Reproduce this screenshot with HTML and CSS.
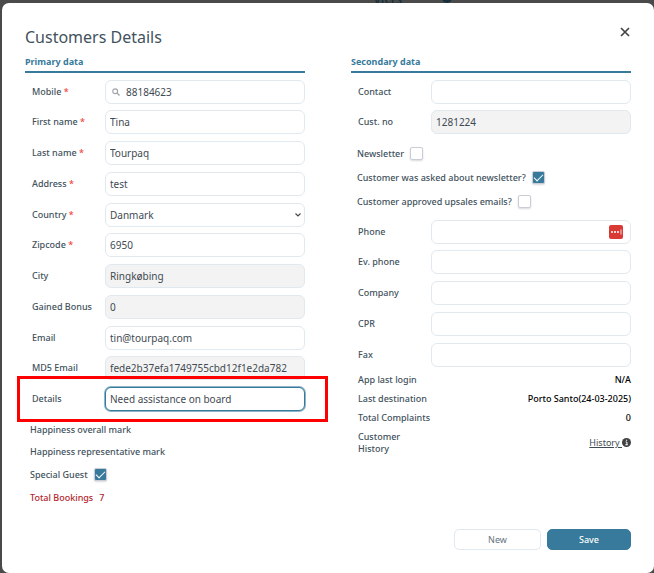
FILE: index.html
```html
<!DOCTYPE html>
<html lang="en">
<head>
<meta charset="utf-8">
<meta name="viewport" content="width=device-width, initial-scale=1">
<title>Customers Details</title>
<link rel="stylesheet" href="styles.css">
</head>
<body>
<div class="backdrop" aria-hidden="true"><span class="backdrop-text">VICES</span><span class="backdrop-dot"></span></div>
<main class="dialog" role="dialog" aria-labelledby="title">
  <header class="dialog-header">
    <h1 id="title">Customers Details</h1>
    <button class="close" type="button" aria-label="Close">
      <svg viewBox="0 0 10 10" width="10" height="10"><path d="M1 1L9 9M9 1L1 9" fill="none" stroke="#444" stroke-width="1.7"/></svg>
    </button>
  </header>
  <form class="form">
    <div class="columns">
      <section class="column">
        <h2>Primary data</h2>
        <div class="fields">
          <div class="field"><label for="mobile">Mobile <b>*</b></label>
            <div class="control">
              <svg class="search" viewBox="0 0 8 8" width="8" height="8"><circle cx="3.2" cy="3.2" r="2.4" fill="none" stroke="#a3a7b0" stroke-width="1.2"/><path d="M5 5L7.5 7.5" stroke="#a3a7b0" stroke-width="1.4"/></svg>
              <input class="with-icon" id="mobile" type="text" value="88184623"></div></div>
          <div class="field"><label for="first">First name <b>*</b></label><input id="first" type="text" value="Tina"></div>
          <div class="field"><label for="last">Last name <b>*</b></label><input id="last" type="text" value="Tourpaq"></div>
          <div class="field"><label for="address">Address <b>*</b></label><input id="address" type="text" value="test"></div>
          <div class="field"><label for="country">Country <b>*</b></label>
            <div class="control">
              <select id="country"><option>Danmark</option></select>
              <svg class="chevron" viewBox="0 0 6 4" width="6" height="4"><path d="M.5 .5L3 3L5.500 .5" fill="none" stroke="#444" stroke-width="1.1"/></svg>
            </div></div>
          <div class="field"><label for="zip">Zipcode <b>*</b></label><input id="zip" type="text" value="6950"></div>
          <div class="field"><label for="city">City</label><input id="city" type="text" value="Ringkøbing" readonly></div>
          <div class="field"><label for="bonus">Gained Bonus</label><input id="bonus" type="text" value="0" readonly></div>
          <div class="field"><label for="email">Email</label><input id="email" type="text" value="tin@tourpaq.com"></div>
          <div class="field"><label for="md5">MD5 Email</label><input id="md5" type="text" value="fede2b37efa1749755cbd12f1e2da782" readonly></div>
          <div class="field highlighted"><label for="details">Details</label><input class="active" id="details" type="text" value="Need assistance on board"></div>
        </div>
        <div class="notes">
          <p>Happiness overall mark</p>
          <p>Happiness representative mark</p>
          <div class="check"><label for="guest">Special Guest</label><input id="guest" type="checkbox" checked></div>
          <p class="bookings"><span>Total Bookings</span><span>7</span></p>
        </div>
      </section>
      <section class="column">
        <h2>Secondary data</h2>
        <div class="fields">
          <div class="field"><label for="contact">Contact</label><input id="contact" type="text"></div>
          <div class="field"><label for="custno">Cust. no</label><input id="custno" type="text" value="1281224" readonly></div>
        </div>
        <div class="checks">
          <div class="check"><label for="news">Newsletter</label><input id="news" type="checkbox"></div>
          <div class="check"><label for="asked">Customer was asked about newsletter?</label><input id="asked" type="checkbox" checked></div>
          <div class="check"><label for="upsales">Customer approved upsales emails?</label><input id="upsales" type="checkbox"></div>
        </div>
        <div class="fields">
          <div class="field"><label for="phone">Phone</label>
            <div class="control">
              <input id="phone" type="text">
              <svg class="manager" viewBox="0 0 14 14" width="14" height="14"><rect width="14" height="14" rx="2" fill="#d93a36"/><circle cx="3" cy="7" r="1" fill="#fff"/><circle cx="6" cy="7" r="1" fill="#fff"/><circle cx="9" cy="7" r="1" fill="#fff"/><path d="M12 4.500V9.500" stroke="#fff" stroke-width=".8"/></svg>
            </div></div>
          <div class="field"><label for="evphone">Ev. phone</label><input id="evphone" type="text"></div>
          <div class="field"><label for="company">Company</label><input id="company" type="text"></div>
          <div class="field"><label for="cpr">CPR</label><input id="cpr" type="text"></div>
          <div class="field"><label for="fax">Fax</label><input id="fax" type="text"></div>
        </div>
        <dl class="facts">
          <div><dt>App last login</dt><dd>N/A</dd></div>
          <div><dt>Last destination</dt><dd>Porto Santo(24-03-2025)</dd></div>
          <div><dt>Total Complaints</dt><dd>0</dd></div>
          <div><dt>Customer History</dt><dd><a href="#history">History <svg viewBox="0 0 10 10" width="9" height="9"><circle cx="5" cy="5" r="5" fill="#3f4143"/><path d="M4 4.500H5.500V7.500M3.700 7.500H6.500M4.400 2.500H5.700" fill="none" stroke="#fff" stroke-width="1.1"/></svg></a></dd></div>
        </dl>
      </section>
    </div>
    <footer class="actions">
      <button class="button" type="button">New</button>
      <button class="button primary" type="button">Save</button>
    </footer>
  </form>
</main>
</body>
</html>
```
FILE: styles.css
```css
* { box-sizing: border-box; }

body {
  margin: 0;
  padding: 3px 0 0 2px;
  background: #4a4a4a;
  color: #42525c;
  font: 500 9px/12px "Noto Sans", "Open Sans", sans-serif;
}

h1, h2, p, dl, dd { margin: 0; }

.backdrop {
  position: absolute;
  top: 0;
  left: 374px;
  display: flex;
  align-items: flex-end;
  gap: 40px;
  height: 3px;
  overflow: hidden;
  color: #16303d;
  font-size: 10px;
  line-height: 6px;
  font-weight: 700;
}

.backdrop-dot {
  width: 10px;
  height: 10px;
  border-radius: 50%;
  background: #16303d;
}

.dialog {
  min-height: calc(100vh - 3px);
  padding: 21px 23px 23px;
  border-radius: 7px;
  background: #fff;
}

.dialog-header {
  display: flex;
  justify-content: space-between;
  align-items: flex-start;
}

h1 {
  padding-top: 1px;
  font-size: 16px;
  line-height: 24px;
  font-weight: 400;
}

.close {
  display: flex;
  margin-top: 3px;
  padding: 0 1px;
  border: 0;
  background: none;
}

.columns {
  display: grid;
  grid-template-columns: 1fr 1fr;
  gap: 46px;
}

h2 {
  margin: 6px 0 7px;
  padding-bottom: 2px;
  border-bottom: 2px solid #377a9b;
  color: #377a9b;
  font-size: 9px;
  line-height: 14px;
  font-weight: 700;
}

.field {
  display: grid;
  grid-template-columns: 73px 1fr;
  align-items: center;
  position: relative;
  margin-bottom: 7px;
  padding-left: 7px;
}

.field:nth-child(4n + 1) { margin-bottom: 6px; }

.field b { color: #f0413c; font-weight: 500; }

.control { position: relative; }

input[type="text"], select {
  display: block;
  width: 100%;
  height: 24px;
  padding: 0 4px;
  border: 1px solid #dfe9ef;
  border-radius: 6px;
  outline: 0;
  background: #fff;
  color: #3f4a52;
  font: 400 10px/16px "Noto Sans", "Open Sans", sans-serif;
  appearance: none;
}

input[type="text"][readonly] { background: #f3f3f3; }

input[type="text"].with-icon { padding-left: 20px; }

input[type="text"].active {
  border-color: #377a9b;
  box-shadow: 0 0 0 1px #8db4c8;
}

.search { position: absolute; top: 8px; left: 7px; }
.chevron { position: absolute; top: 10px; right: 4px; }
.manager { position: absolute; top: 5px; right: 8px; }

.highlighted::after {
  content: "";
  position: absolute;
  inset: -11px -23px -11px -8px;
  border: 3px solid #f00;
  pointer-events: none;
}

.notes {
  display: grid;
  gap: 10px;
  padding: 6px 0 0 5px;
}

.check {
  display: flex;
  align-items: center;
  gap: 6px;
}

.bookings { display: flex; gap: 6px; padding-top: 1px; color: #b3262c; }

input[type="checkbox"] {
  width: 13px;
  height: 13px;
  margin: 0;
  border: 1px solid #c9cdd6;
  border-radius: 2px;
  background: #fff;
  box-shadow: 0 1px 2px #d8dae0;
  appearance: none;
}

input[type="checkbox"]:checked {
  display: grid;
  place-items: center;
  background: #377a9b;
}

input[type="checkbox"]:checked::before {
  content: "";
  width: 8px;
  height: 4px;
  margin-bottom: 3px;
  border: solid #fff;
  border-width: 0 0 1px 1px;
  rotate: -45deg;
}

.checks {
  display: grid;
  gap: 11px;
  padding: 6px 0 12px 6px;
}

.facts { display: grid; gap: 7px; padding: 1px 0 0 7px; }

.facts div {
  display: flex;
  justify-content: space-between;
  align-items: center;
}

.facts div:last-child dt { width: 60px; }

.facts dd { color: #000; }

.facts a { color: #3f4a52; font-weight: 400; }

.facts svg { vertical-align: -1px; }

.actions {
  display: flex;
  justify-content: flex-end;
  gap: 6px;
  margin-top: 25px;
}

.button {
  width: 87px;
  height: 21px;
  padding: 0;
  border: 1px solid #dfe9ef;
  border-radius: 5px;
  background: #fff;
  color: #65747e;
  font: 400 9px/12px "Noto Sans", "Open Sans", sans-serif;
}

.primary {
  width: 84px;
  border-color: #377a9b;
  background: #377a9b;
  color: #fff;
  font-weight: 500;
}
```
